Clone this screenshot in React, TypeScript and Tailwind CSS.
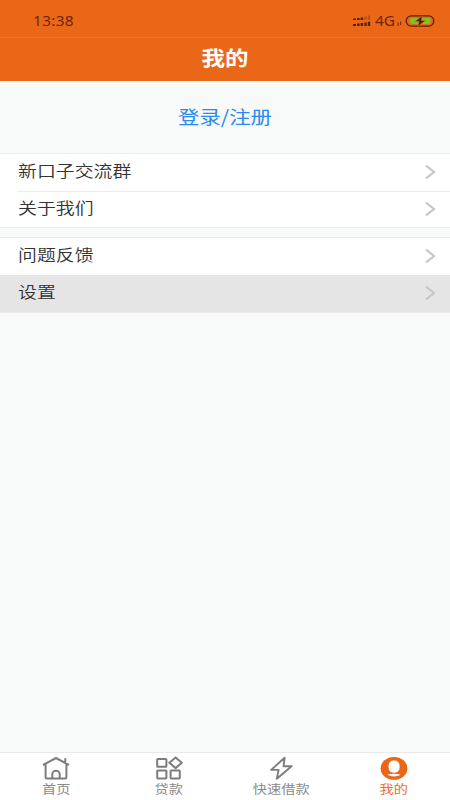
import React from "react";

type Tab = { label: string; icon: React.ReactNode; active?: boolean };

const HomeIcon = () => (
  <svg width="28" height="24" viewBox="0 0 28 24" fill="none" stroke="#7d7d7d" strokeWidth="2">
    <path d="M1 9 14 2l13 7M3.6 8v13.4q0 1 1 1h18.8q1 0 1-1V8M23.3 2.2v5" />
    <path d="M10.3 22.4v-4.4a3.7 3.3 0 0 1 7.4 0v4.4" />
  </svg>
);

const LoanIcon = () => (
  <svg width="28" height="24" viewBox="0 0 28 24" fill="none" stroke="#7d7d7d" strokeWidth="2">
    <rect x="2.2" y="3" width="9.2" height="7.8" rx=".6" />
    <rect x="2.2" y="14.4" width="9.2" height="8" rx=".6" />
    <rect x="15.6" y="14.4" width="9.2" height="8" rx=".6" />
    <path d="m20.6 1.5 6.2 5.3-6.2 5.3-6.2-5.3z" />
  </svg>
);

const BoltIcon = () => (
  <svg width="28" height="24" viewBox="0 0 28 24" fill="none" stroke="#7d7d7d" strokeWidth="1.9" strokeLinejoin="round">
    <path d="M17.6 1.8 4.2 13.9h7.4L9.8 22.7 24.6 10.2h-8z" />
  </svg>
);

const MineIcon = () => (
  <svg width="28" height="24" viewBox="0 0 28 24">
    <ellipse cx="14" cy="12.4" rx="13.4" ry="11.4" fill="#eb6718" />
    <rect x="8.6" y="4.6" width="11" height="12.2" rx="5" fill="#fff" />
    <path d="M7.2 18.8q3-1 6.8-1t6.8 1q-6.8 3.6-13.6 0z" fill="#fff" />
  </svg>
);

const groups = [
  [
    { label: "新口子交流群", className: "h-[38px] border-b border-[#ececec]" },
    { label: "关于我们", className: "h-[35px]" },
  ],
  [
    { label: "问题反馈", className: "h-[37px]" },
    { label: "设置", className: "h-[37px]", pressed: true },
  ],
];

const tabs: Tab[] = [
  { label: "首页", icon: <HomeIcon /> },
  { label: "贷款", icon: <LoanIcon /> },
  { label: "快速借款", icon: <BoltIcon /> },
  { label: "我的", icon: <MineIcon />, active: true },
];

const StatusBar = () => (
  <div className="flex h-[38px] items-center justify-between border-b border-[#ee752c] pt-[5px] pr-[15px] pl-[33px] text-[#6b2607]">
    <span className="origin-left scale-x-[1.1] font-['Noto_Sans'] text-[14px] leading-5 tracking-[0.3px]">13:38</span>
    <div className="flex items-center">
      <svg width="18" height="12" viewBox="0 0 18 12" fill="#5a2108">
        <path d="M0 3.5h3V5H0zM4 3h2.6v2H4zM7.6 2.4h2.6V5H7.6z" />
        <path d="M11.4 1.2h2.4V5h-2.4zM14.8.6h2.4V5h-2.4z" opacity=".3" />
        <path d="M0 9h3v2H0zM4 8.6h2.6V11H4zM7.6 8h2.6v3H7.6zM11.4 7.4h2.4V11h-2.4zM14.8 6.8h2.4V11h-2.4z" />
      </svg>
      <span className="ml-1 w-[21px] origin-left scale-x-[1.1] font-['Noto_Sans'] text-[14px] leading-5">4G</span>
      <svg className="ml-px" width="5" height="12" viewBox="0 0 5 12" stroke="#6b2607" fill="none">
        <path d="M1.2 7.5 1 11M3.8 6.5l-.3 3.5" />
      </svg>
      <svg className="-mr-px mb-px ml-[3px]" width="31" height="12" viewBox="0 0 31 12">
        <rect x="1.2" y=".9" width="27.6" height="10.2" rx="5.1" fill="none" stroke="#5a2108" strokeWidth="1.3" />
        <rect x="5" y="2.9" width="20.4" height="6.2" rx="2.4" fill="#76c626" />
        <path d="M17.4.8 10 6.6h4.2L12.6 11.6 20.4 5.6h-4.2z" fill="#4a1b05" stroke="#eb6718" strokeWidth=".6" />
      </svg>
    </div>
  </div>
);

const Row = ({ label, className, pressed }: { label: string; className: string; pressed?: boolean }) => (
  <div className={pressed ? "bg-[#e5e5e5]" : "bg-white"}>
    <div className={`ml-[17px] flex items-center justify-between pr-[13px] ${className}`}>
      <span className="mb-[5px] ml-px scale-y-[0.87] text-[18.9px] leading-6 font-[350] text-[#333]">{label}</span>
      <svg className="mb-px" width="13" height="16" viewBox="0 0 13 16" fill="none" stroke="#c7c7c7" strokeWidth="2.2">
        <path d="m2 1.6 8 6.4-8 6.4" />
      </svg>
    </div>
  </div>
);

const App: React.FC = () => {
  return (
    <div className="flex h-[800px] w-[450px] flex-col overflow-hidden bg-[#f8f9f9] font-['Noto_Sans_CJK_SC',sans-serif]">
      <header className="h-[81px] bg-[#eb6718]">
        <StatusBar />
        <h1 className="flex h-[39px] scale-y-[0.87] items-center justify-center text-[23.5px] font-bold text-white">
          我的
        </h1>
      </header>

      <main className="flex-1">
        <button className="flex h-[72px] w-full items-center justify-center pb-0.5 text-[21.4px] text-[#2b8aea]">
          <span className="scale-y-[0.87]">登录/注册</span>
        </button>

        <div className="flex flex-col gap-[9px]">
          {groups.map((items) => (
            <section key={items[0].label} className="border-y border-[#ececec]">
              {items.map((item) => (
                <Row key={item.label} {...item} />
              ))}
            </section>
          ))}
        </div>
      </main>

      <nav className="grid h-12 grid-cols-4 border-t border-[#e9ebeb] bg-white">
        {tabs.map(({ label, icon, active }) => (
          <div key={label} className="flex flex-col items-center pt-[3px]">
            {icon}
            <span
              className={`-mt-px scale-y-[0.87] text-[14.2px] leading-5 ${active ? "text-[#eb6f26]" : "text-[#8a8a8a]"}`}
            >
              {label}
            </span>
          </div>
        ))}
      </nav>
    </div>
  );
};

export default App;
